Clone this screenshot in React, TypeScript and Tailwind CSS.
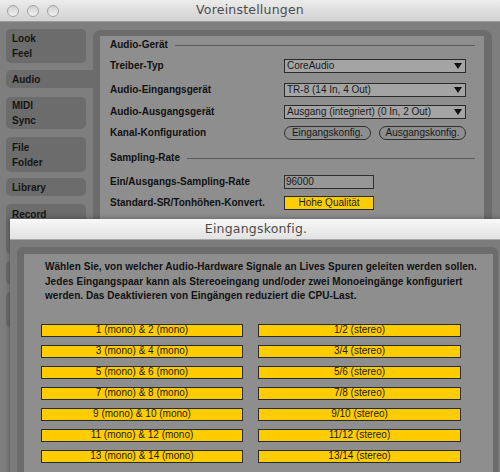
import React from "react";

const Dropdown = ({ text }: { text: string }) => (
  <div className="w-[182px] h-[14px] bg-[#a4a4a4] border border-[#2a2a2a] flex items-center justify-between pl-[2px] pr-[3px]">
    <span className="text-[10px] font-normal text-[#1a1a1a] leading-none">{text}</span>
    <svg width="8" height="6" viewBox="0 0 8 6"><path d="M0 0 L8 0 L4 6 Z" fill="#111" /></svg>
  </div>
);

const Tab = ({ lines, h, active = false }: { lines: string[]; h: string; active?: boolean }) => (
  <div
    className={`${h} ${active ? "w-[90px] rounded-l-[5px]" : "w-[80px] rounded-[5px]"} bg-[#6c6c6c] flex flex-col justify-center pl-[6px] text-[10px] font-bold text-[#151515] leading-[15px]`}
  >
    {lines.map((l) => (
      <div key={l}>{l}</div>
    ))}
  </div>
);

const Row = ({ label, mt, children }: { label: string; mt: string; children?: React.ReactNode }) => (
  <div className={`${mt} h-[14px] flex items-center`}>
    <div className="w-[174px] text-[10px] font-bold text-[#111] leading-none">{label}</div>
    {children}
  </div>
);

const Heading = ({ label, mt }: { label: string; mt: string }) => (
  <div className={`${mt} h-[14px] flex items-center gap-[7px] pr-[9px]`}>
    <div className="text-[10px] font-bold text-[#111] leading-none whitespace-nowrap">{label}</div>
    <div className="flex-1 h-px bg-[#5c5c5c]" />
  </div>
);

const Pill = ({ text }: { text: string }) => (
  <div className="w-[87px] h-[14px] rounded-full border border-[#2f2f2f] flex items-center justify-center text-[10px] text-[#1a1a1a] leading-none">
    {text}
  </div>
);

const YBtn = ({ text }: { text: string }) => (
  <div className="h-[13px] bg-[#ffcc00] border border-[#2b2b2b] flex items-center justify-center text-[10px] text-[#1a1a1a] leading-none">
    {text}
  </div>
);

export default function App() {
  const rows = [1, 3, 5, 7, 9, 11, 13];
  return (
    <div
      className="w-[500px] h-[472px] relative overflow-hidden bg-[#7e7e7e]"
      style={{ fontFamily: '"Liberation Sans", Arial, sans-serif' }}
    >
      {/* Title bar */}
      <div className="h-[22px] bg-gradient-to-b from-[#ececec] to-[#d2d2d2] border-b border-[#9a9a9a] relative flex items-center justify-center">
        <div className="absolute left-[7px] top-[5px] flex gap-[8px]">
          {[0, 1, 2].map((i) => (
            <div key={i} className="w-[12px] h-[12px] rounded-full border border-[#a4a4a4] bg-gradient-to-b from-[#d0d0d0] to-[#f2f2f2]" />
          ))}
        </div>
        <span className="text-[12.5px] text-[#4c4c4c] tracking-[0.2px]" style={{ fontFamily: '"DejaVu Sans", sans-serif' }}>
          Voreinstellungen
        </span>
      </div>

      {/* Body */}
      <div className="flex pt-[7px] pl-[6px]">
        <div className="flex flex-col">
          <Tab lines={["Look", "Feel"]} h="h-[34px]" />
          <div className="h-[7px]" />
          <Tab lines={["Audio"]} h="h-[18px]" active />
          <div className="h-[9px]" />
          <Tab lines={["MIDI", "Sync"]} h="h-[32px]" />
          <div className="h-[8px]" />
          <Tab lines={["File", "Folder"]} h="h-[35px]" />
          <div className="h-[6px]" />
          <Tab lines={["Library"]} h="h-[18px]" />
          <div className="h-[8px]" />
          <Tab lines={["Record", "Warp", "Launch"]} h="h-[50px]" />
          <div className="h-[7px]" />
          <Tab lines={["CPU"]} h="h-[24px]" />
          <div className="h-[7px]" />
          <Tab lines={["Licenses", "Maintenance"]} h="h-[36px]" />
        </div>
        <div className="ml-[-3px] mt-[1px] w-[399px] h-[460px] bg-[#6c6c6c] rounded-[8px] pl-[7px] pt-[6px] pr-[8px]">
          <div className="h-full bg-[#8e8e8e] pl-[10px] flex flex-col">
            <Heading label="Audio-Gerät" mt="mt-[2px]" />
            <Row label="Treiber-Typ" mt="mt-[7px]">
              <Dropdown text="CoreAudio" />
            </Row>
            <Row label="Audio-Eingangsgerät" mt="mt-[10px]">
              <Dropdown text="TR-8 (14 In, 4 Out)" />
            </Row>
            <Row label="Audio-Ausgangsgerät" mt="mt-[8px]">
              <Dropdown text="Ausgang (integriert) (0 In, 2 Out)" />
            </Row>
            <Row label="Kanal-Konfiguration" mt="mt-[7px]">
              <div className="flex gap-[8px]">
                <Pill text="Eingangskonfig." />
                <Pill text="Ausgangskonfig." />
              </div>
            </Row>
            <Heading label="Sampling-Rate" mt="mt-[11px]" />
            <Row label="Ein/Ausgangs-Sampling-Rate" mt="mt-[10px]">
              <div className="w-[90px] h-[14px] bg-[#979797] border border-[#2f2f2f] flex items-center pl-[1px] text-[10px] text-[#1a1a1a] leading-none">
                96000
              </div>
            </Row>
            <Row label="Standard-SR/Tonhöhen-Konvert." mt="mt-[7px]">
              <div className="w-[90px] h-[14px] bg-[#ffcc00] border border-[#2b2b2b] flex items-center justify-center text-[10px] text-[#1a1a1a] leading-none">
                Hohe Qualität
              </div>
            </Row>
          </div>
        </div>
      </div>

      {/* Dialog */}
      <div className="absolute left-[10px] top-[219px] w-[492px] h-[260px] bg-[#7b7b7b] shadow-[0_0_6px_rgba(0,0,0,0.35)] flex flex-col">
        <div className="h-[21px] shrink-0 bg-gradient-to-b from-[#f8f8f8] to-[#e2e2e2] border-b border-[#a8a8a8] flex items-center justify-center">
          <span className="text-[12.5px] text-[#4c4c4c] tracking-[0.2px]" style={{ fontFamily: '"DejaVu Sans", sans-serif' }}>
            Eingangskonfig.
          </span>
        </div>
        <div className="pl-[7px] pt-[7px] pr-[4px] flex-1">
          <div className="h-full bg-[#6c6c6c] rounded-[6px] pl-[7px] pt-[7px] pr-[5px]">
            <div className="h-full bg-[#8e8e8e] pt-[6px]">
              <div className="pl-[21px] text-[10px] font-bold text-[#111] leading-[14.5px] tracking-[0.05px]">
                <div>Wählen Sie, von welcher Audio-Hardware Signale an Lives Spuren geleiten werden sollen.</div>
                <div>Jedes Eingangspaar kann als Stereoeingang und/oder zwei Monoeingänge konfiguriert</div>
                <div>werden. Das Deaktivieren von Eingängen reduziert die CPU-Last.</div>
              </div>
              <div className="mt-[20px] pl-[17px] flex flex-col gap-[8px]">
                {rows.map((n) => (
                  <div key={n} className="flex gap-[15px]">
                    <div className="w-[202px]">
                      <YBtn text={`${n} (mono) & ${n + 1} (mono)`} />
                    </div>
                    <div className="w-[203px]">
                      <YBtn text={`${n}/${n + 1} (stereo)`} />
                    </div>
                  </div>
                ))}
              </div>
            </div>
          </div>
        </div>
      </div>
    </div>
  );
}
